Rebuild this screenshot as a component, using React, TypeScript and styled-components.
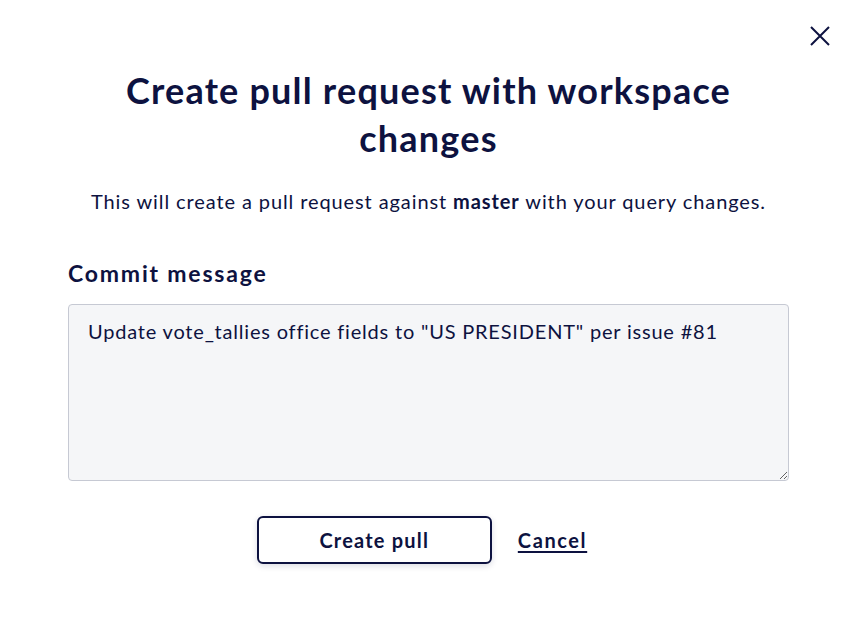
import React from "react";
import styled, { createGlobalStyle } from "styled-components";

const Global = createGlobalStyle`
  html, body { margin: 0; padding: 0; background: #ffffff; }
  body { font-family: "Lato", "Open Sans", sans-serif; color: #0d1240; }
`;

const Dialog = styled.div`
  position: relative;
  width: 856px;
  height: 632px;
  box-sizing: border-box;
  padding: 66px 67px 0 68px;
  display: flex;
  flex-direction: column;
  background: #fff;
`;

const CloseButton = styled.button`
  position: absolute;
  top: 24px;
  right: 24px;
  width: 24px;
  height: 24px;
  padding: 0;
  border: none;
  background: transparent;
  color: #0d1240;
  cursor: pointer;
  display: flex;
  align-items: center;
  justify-content: center;
`;

const Title = styled.h1`
  margin: 0;
  text-align: center;
  font-size: 36px;
  line-height: 48px;
  font-weight: 700;
  letter-spacing: 1.2px;
  color: #0d1240;
  padding: 0 20px;
`;

const Subtitle = styled.p`
  margin: 25px 0 0;
  text-align: center;
  font-size: 20px;
  line-height: 28px;
  letter-spacing: 0.9px;
  color: #0d1240;
  b { font-weight: 700; }
`;

const Label = styled.label`
  margin-top: 43px;
  font-size: 23px;
  line-height: 30px;
  font-weight: 700;
  letter-spacing: 1.8px;
  color: #0d1240;
`;

const TextArea = styled.textarea`
  margin-top: 16px;
  height: 177px;
  box-sizing: border-box;
  padding: 12px 19px;
  border: 1px solid #c6c9d3;
  border-radius: 4px;
  background: #f5f6f8;
  font-family: inherit;
  font-size: 20px;
  line-height: 28px;
  letter-spacing: 0.8px;
  color: #0d1240;
  resize: vertical;
  outline: none;
`;

const Actions = styled.div`
  margin-top: 35px;
  display: flex;
  align-items: center;
  justify-content: center;
  gap: 26px;
  padding-right: 13px;
`;

const PrimaryButton = styled.button`
  width: 235px;
  height: 48px;
  border: 2px solid #0d1240;
  border-radius: 6px;
  background: #fff;
  font-family: inherit;
  font-size: 20px;
  font-weight: 700;
  letter-spacing: 1.2px;
  color: #0d1240;
  box-shadow: 0 2px 6px rgba(13, 18, 64, 0.15);
  cursor: pointer;
`;

const LinkButton = styled.button`
  border: none;
  background: none;
  padding: 0;
  font-family: inherit;
  font-size: 20px;
  font-weight: 700;
  letter-spacing: 1.6px;
  color: #0d1240;
  text-decoration: underline;
  text-underline-offset: 3px;
  cursor: pointer;
`;

export default function App() {
  return (
    <>
      <Global />
      <Dialog>
        <CloseButton aria-label="Close">
          <svg width="22" height="22" viewBox="0 0 22 22" fill="none" stroke="currentColor" strokeWidth="2">
            <path d="M2 2 L20 20 M20 2 L2 20" />
          </svg>
        </CloseButton>
        <Title>Create pull request with workspace changes</Title>
        <Subtitle>
          This will create a pull request against <b>master</b> with your query changes.
        </Subtitle>
        <Label htmlFor="commit">Commit message</Label>
        <TextArea
          id="commit"
          defaultValue={'Update vote_tallies office fields to "US PRESIDENT" per issue #81'}
        />
        <Actions>
          <PrimaryButton>Create pull</PrimaryButton>
          <LinkButton>Cancel</LinkButton>
        </Actions>
      </Dialog>
    </>
  );
}
